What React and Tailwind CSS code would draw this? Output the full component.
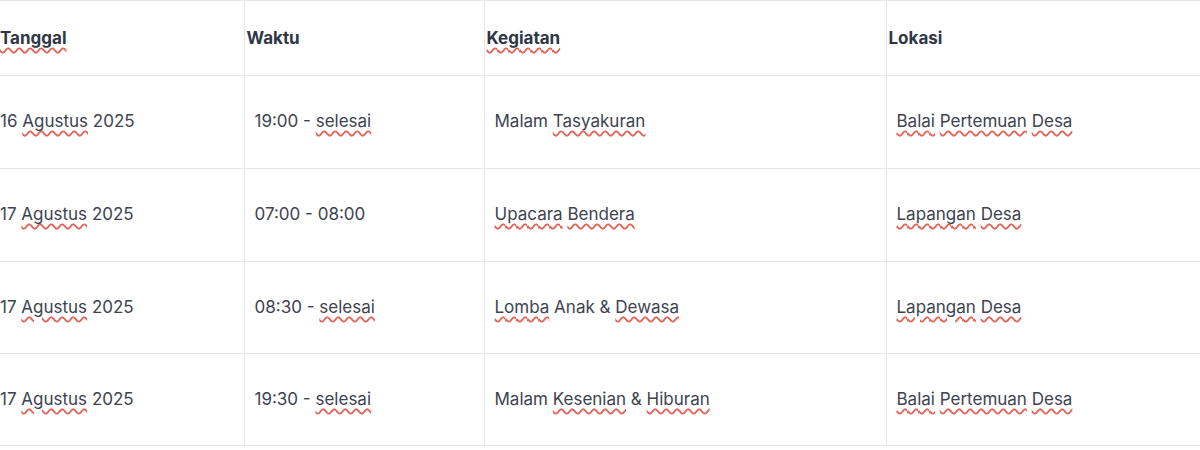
import React from 'react';

const sp = 'underline decoration-wavy decoration-[#e0675b] decoration-[1.5px] underline-offset-[3px]';

// words the browser's spellchecker flagged in the screenshot
const W = ({ children }) => <span className={sp}>{children}</span>;

const rows = [
  {
    tanggal: <>16 <W>Agustus</W> 2025</>,
    waktu: <>19:00 - <W>selesai</W></>,
    kegiatan: <>Malam <W>Tasyakuran</W></>,
    lokasi: <><W>Balai</W> <W>Pertemuan</W> <W>Desa</W></>,
  },
  {
    tanggal: <>17 <W>Agustus</W> 2025</>,
    waktu: <>07:00 - 08:00</>,
    kegiatan: <><W>Upacara</W> <W>Bendera</W></>,
    lokasi: <><W>Lapangan</W> <W>Desa</W></>,
  },
  {
    tanggal: <>17 <W>Agustus</W> 2025</>,
    waktu: <>08:30 - <W>selesai</W></>,
    kegiatan: <><W>Lomba</W> Anak &amp; <W>Dewasa</W></>,
    lokasi: <><W>Lapangan</W> <W>Desa</W></>,
  },
  {
    tanggal: <>17 <W>Agustus</W> 2025</>,
    waktu: <>19:30 - <W>selesai</W></>,
    kegiatan: <>Malam <W>Kesenian</W> &amp; <W>Hiburan</W></>,
    lokasi: <><W>Balai</W> <W>Pertemuan</W> <W>Desa</W></>,
  },
];

export default function App() {
  return (
    <div className="w-[1200px] h-[450px] bg-white overflow-hidden" style={{ fontFamily: 'Inter, "Noto Sans", sans-serif' }}>
      <table className="w-[1200px] table-fixed border-collapse text-[17px]">
        <colgroup>
          <col className="w-[244px]" />
          <col className="w-[240px]" />
          <col className="w-[402px]" />
          <col />
        </colgroup>
        <thead>
          <tr className="h-[75px] border-t border-b border-gray-200 text-left text-[#2f3746]">
            <th className="font-bold p-0 pt-[2px] align-middle"><W>Tanggal</W></th>
            <th className="font-bold pl-[2px] pt-[2px] border-l border-gray-200 align-middle">Waktu</th>
            <th className="font-bold pl-[2px] pt-[2px] border-l border-gray-200 align-middle"><W>Kegiatan</W></th>
            <th className="font-bold pl-[2px] pt-[2px] border-l border-gray-200 align-middle">Lokasi</th>
          </tr>
        </thead>
        <tbody className="text-[#3d4350]">
          {rows.map((r, i) => (
            <tr key={i} className={`border-b border-gray-200 ${i < 2 ? 'h-[93px]' : 'h-[92px]'}`}>
              <td className="p-0 align-middle">{r.tanggal}</td>
              <td className="pl-[10px] border-l border-gray-200 align-middle">{r.waktu}</td>
              <td className="pl-[10px] border-l border-gray-200 align-middle">{r.kegiatan}</td>
              <td className="pl-[10px] border-l border-gray-200 align-middle">{r.lokasi}</td>
            </tr>
          ))}
        </tbody>
      </table>
    </div>
  );
}
